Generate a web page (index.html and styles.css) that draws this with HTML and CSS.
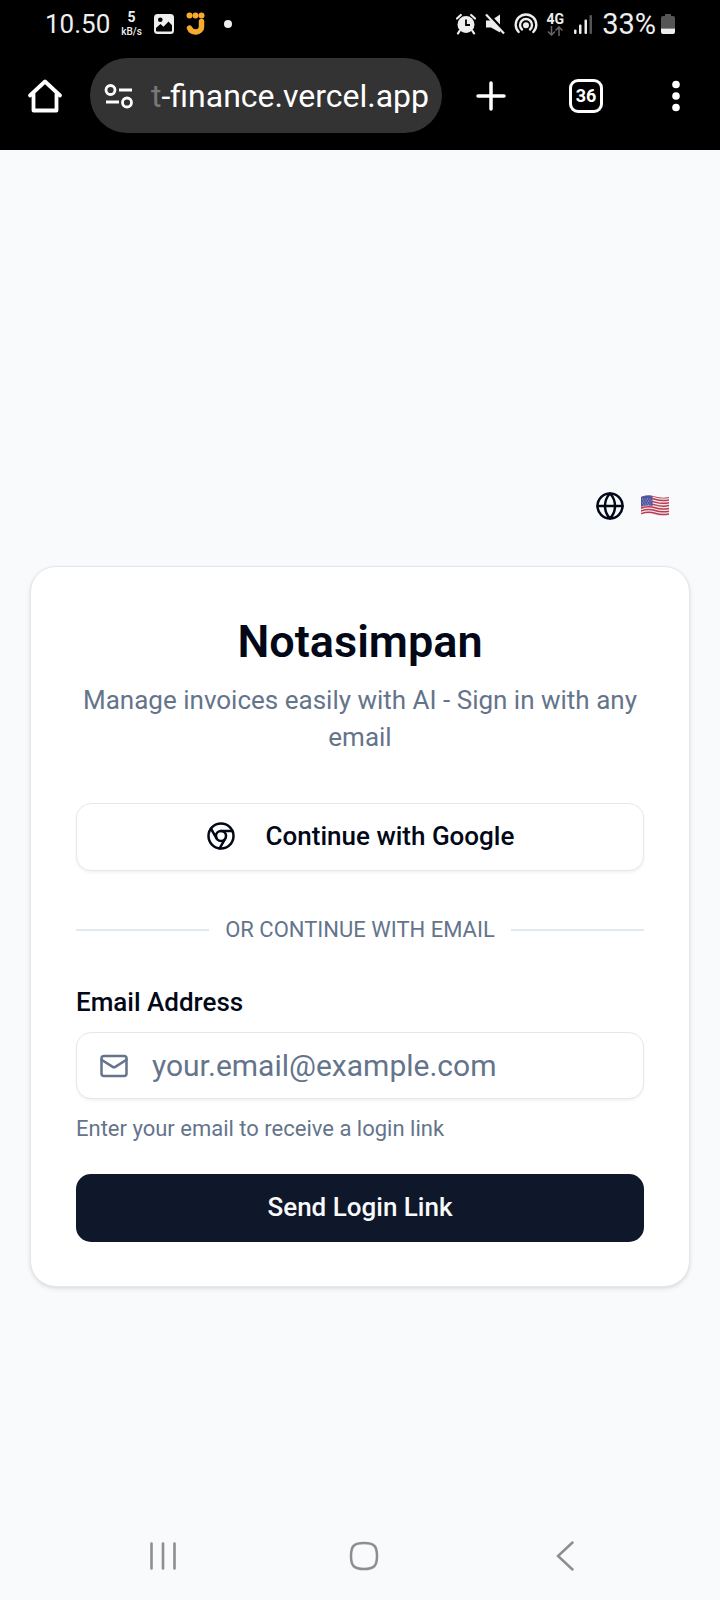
FILE: index.html
```html
<!DOCTYPE html>
<html lang="en">
<head>
<meta charset="utf-8">
<meta name="viewport" content="width=device-width, initial-scale=1">
<title>Notasimpan</title>
<link rel="stylesheet" href="styles.css">
</head>
<body>
<header class="system">
  <div class="status">
    <div class="status-left">
      <span class="clock">10.50</span>
      <span class="speed"><b>5</b><span>kB/s</span></span>
      <svg width="22" height="22" viewBox="0 0 22 22"><rect x="1" y="1" width="20" height="20" rx="3.5" fill="#eee"/><circle cx="7.3" cy="6.7" r="2.3" fill="#000"/><path d="M3 17.5V15l4.5-4 3 2.7L15.500 8.500 19 12.200V17.500a1 1 0 0 1-1 1H4a1 1 0 0 1-1-1z" fill="#000"/></svg>
      <svg width="19" height="24" viewBox="0 0 19 24"><g fill="#f6ab2f"><circle cx="3.500" cy="3.500" r="3"/><circle cx="9.500" cy="3.500" r="3"/><circle cx="15.500" cy="3.500" r="3"/></g><path d="M15.500 9.500v4.500a5.500 5.500 0 0 1-6 6c-3 0-5-1.500-6-4" fill="none" stroke="#f6ab2f" stroke-width="5.500" stroke-linecap="round"/></svg>
      <span class="dot"></span>
    </div>
    <div class="status-right">
      <svg width="20" height="22" viewBox="0 0 20 22"><circle cx="10" cy="11.500" r="8.500" fill="#eee"/><path d="M1 5.500 4.800 2M19 5.500 15.200 2M3.500 18l-1.500 2.300M16.500 18l1.500 2.300" stroke="#eee" stroke-width="2.200" stroke-linecap="round"/><path d="M10 6.500v5.500h4" fill="none" stroke="#000" stroke-width="1.800"/></svg>
      <svg width="20" height="22" viewBox="0 0 20 22"><path d="M1 7.500h5L15 1.500v18L6 14.500H1z" fill="#eee"/><path d="M2.500.5 21 20" stroke="#000" stroke-width="3"/><path d="M1 1.500 19 20.500" stroke="#eee" stroke-width="2.200"/></svg>
      <svg width="24" height="22" viewBox="0 0 24 22" fill="none" stroke="#eee" stroke-width="2.400" stroke-linecap="round"><path d="M4.700 19a10.300 10.300 0 1 1 14.600 0"/><path d="M8 16.500a6 6 0 1 1 8 0"/><circle cx="12" cy="12.200" r="1.800" fill="#eee"/></svg>
      <span class="network"><b>4G</b><svg width="16" height="10" viewBox="0 0 16 10" fill="none" stroke="#666" stroke-width="1.500"><path d="M4.500 0v9M1 5.500 4.500 9 8 5.500M12 10V1M8.500 4.500 12 1l3.500 3.500"/></svg></span>
      <svg width="20" height="22" viewBox="0 0 20 22"><g fill="#eee"><rect x="1" y="16.500" width="2.500" height="4.500" rx="1"/><rect x="6" y="11.500" width="2.500" height="9.500" rx="1"/><rect x="11.500" y="6.500" width="2.500" height="14.500" rx="1"/></g><rect x="16.500" y="2" width="2.500" height="19" rx="1" fill="#555"/></svg>
      <span class="battery">33%</span>
      <svg width="14" height="22" viewBox="0 0 14 22"><path d="M4 1h6v2h2a2 2 0 0 1 2 2v10.500H0V5a2 2 0 0 1 2-2h2z" fill="#555"/><path d="M0 15.500h14V19a2 2 0 0 1-2 2H2a2 2 0 0 1-2-2z" fill="#eee"/></svg>
    </div>
  </div>
  <nav class="browser" aria-label="Browser">
    <button class="tool" aria-label="Home"><svg width="36" height="36" viewBox="0 0 36 36" fill="none" stroke="#fff" stroke-width="3.800" stroke-linecap="round" stroke-linejoin="round"><path d="M3 17.500 18 3.500l15 14"/><path d="M6.500 16v16.500h23V16"/></svg></button>
    <button class="address"><svg width="30" height="26" viewBox="0 0 30 26" fill="none" stroke="#fff" stroke-width="2.800"><circle cx="6.500" cy="7" r="4.500"/><path d="M15 7h13M2 19h13"/><circle cx="23" cy="19.500" r="4.500"/></svg><span class="url"><span class="faded">t</span>-finance.vercel.app</span></button>
    <button class="tool" aria-label="New tab"><svg width="30" height="30" viewBox="0 0 30 30" stroke="#fff" stroke-width="3.500" stroke-linecap="round"><path d="M15 2v26M2 15h26"/></svg></button>
    <button class="tool" aria-label="36 open tabs"><span class="tabs">36</span></button>
    <button class="tool" aria-label="Menu"><svg width="8" height="32" viewBox="0 0 8 32" fill="#fff"><circle cx="4" cy="4.500" r="3.800"/><circle cx="4" cy="16" r="3.800"/><circle cx="4" cy="27.500" r="3.800"/></svg></button>
  </nav>
</header>

<main class="page">
  <button class="language" aria-label="Language: English (US)">
    <svg class="icon" viewBox="0 0 24 24"><circle cx="12" cy="12" r="10"/><path d="M12 2a14.500 14.500 0 0 0 0 20 14.500 14.500 0 0 0 0-20"/><path d="M2 12h20"/></svg>
    <svg width="30" height="22" viewBox="0 0 30 22">
      <defs><clipPath id="wave"><path d="M1 2Q8-.5 15 1.500T29 2V20Q22 22.500 15 20.200T1 19.500z"/></clipPath></defs>
      <g clip-path="url(#wave)">
        <rect width="30" height="22" fill="#f4e9ee"/>
        <g fill="none" stroke="#b93c50" stroke-width="1.500">
          <path d="M0 2.300Q8-.7 15 1.500T30 2M0 5.100Q8 2.100 15 4.300T30 4.800M0 7.900Q8 4.900 15 7.100T30 7.600M0 10.700Q8 7.700 15 9.900T30 10.400M0 13.500Q8 10.500 15 12.700T30 13.200M0 16.300Q8 13.300 15 15.500T30 16M0 19.100Q8 16.100 15 18.300T30 18.800"/>
        </g>
        <path d="M0 0H12.500V11Q7 9.500 0 12z" fill="#5055a0"/>
        <path d="M2 4h10M3 6h10M2 8h10M3 10h8" stroke="#b9bbdc" stroke-width=".8" stroke-dasharray="1 1.500"/>
      </g>
    </svg>
  </button>

  <section class="card">
    <h1 class="title">Notasimpan</h1>
    <p class="subtitle">Manage invoices easily with AI - Sign in with any email</p>
    <button class="button outline">
      <svg class="icon" viewBox="0 0 24 24"><circle cx="12" cy="12" r="10"/><circle cx="12" cy="12" r="4"/><path d="M21.170 8H12M3.950 6.060 8.540 14M10.880 21.940 15.460 14"/></svg>
      Continue with Google
    </button>
    <div class="divider"><span>OR CONTINUE WITH EMAIL</span></div>
    <form class="form">
      <label class="label" for="email">Email Address</label>
      <div class="field">
        <svg class="icon" viewBox="0 0 24 24"><rect x="2" y="4" width="20" height="16" rx="2"/><path d="m22 7-8.970 5.700a1.940 1.940 0 0 1-2.060 0L2 7"/></svg>
        <input class="input" id="email" type="email" placeholder="your.email@example.com" aria-describedby="hint">
      </div>
      <p class="hint" id="hint">Enter your email to receive a login link</p>
      <button class="button primary" type="submit">Send Login Link</button>
    </form>
  </section>
</main>

<nav class="android" aria-label="System">
  <button class="tool" aria-label="Recent apps"><svg width="28" height="30" viewBox="0 0 28 30" stroke="#8c8e90" stroke-width="2.600" stroke-linecap="round"><path d="M2.500 2.500v25M14 2.500v25M25.500 2.500v25"/></svg></button>
  <button class="tool" aria-label="Home"><svg width="30" height="30" viewBox="0 0 30 30" fill="none" stroke="#8c8e90" stroke-width="2.500"><path d="M15 2C25 2 28 5 28 15S25 28 15 28 2 25 2 15 5 2 15 2z"/></svg></button>
  <button class="tool" aria-label="Back"><svg width="18" height="30" viewBox="0 0 18 30" fill="none" stroke="#8c8e90" stroke-width="2.500" stroke-linecap="round"><path d="M16.500 1.500 2 15l14.500 13.500"/></svg></button>
</nav>
</body>
</html>
```
FILE: styles.css
```css
* { box-sizing: border-box; }

body {
  margin: 0;
  min-height: 100vh;
  display: flex;
  flex-direction: column;
  background: #f8fafc;
  color: #020817;
  font-family: Roboto, "Liberation Sans", sans-serif;
}

button {
  border: 0;
  padding: 0;
  background: none;
  color: inherit;
  font: inherit;
}

svg { display: block; flex: none; }

.system { background: #000; color: #fff; padding-bottom: 17px; }

.status {
  display: flex;
  justify-content: space-between;
  height: 58px;
  padding: 0 45px 11px;
  color: #eee;
}

.status-left, .status-right { display: flex; align-items: center; }
.status-left { gap: 11px; }
.status-right { gap: 9px; }

.clock { font-size: 26px; line-height: 32px; }
.battery { margin-right: -4px; font-size: 29px; line-height: 32px; }

.speed, .network {
  display: flex;
  flex-direction: column;
  align-items: center;
  font-size: 10px;
  line-height: 12px;
  font-weight: 500;
}
.speed b { font-size: 14px; line-height: 17px; }
.network b { font-size: 14px; line-height: 14px; }

.dot { width: 8px; height: 8px; margin-left: 8px; border-radius: 50%; background: #eee; }

.browser {
  display: grid;
  grid-template-columns: 90px 1fr 97px 94px 85px;
  padding-right: 2px;
  height: 75px;
}

.tool { display: flex; align-items: center; justify-content: center; }

.address {
  display: flex;
  align-items: center;
  gap: 17px;
  min-width: 0;
  padding: 0 12px 0 14px;
  border-radius: 38px;
  background: #333;
  overflow: hidden;
}

.url { font-size: 32px; line-height: 40px; white-space: nowrap; }
.faded { color: #777; }

.tabs {
  width: 34px;
  height: 34px;
  border: 3px solid #fff;
  border-radius: 9px;
  font-size: 18px;
  line-height: 28px;
  font-weight: 700;
}

.page {
  flex: 1;
  display: flex;
  flex-direction: column;
  gap: 42px;
  padding: 337px 30px 0;
}

.language {
  display: flex;
  align-items: center;
  align-self: flex-end;
  gap: 15px;
  height: 37px;
  padding-right: 20px;
}

.icon {
  width: 30px;
  height: 30px;
  fill: none;
  stroke: currentColor;
  stroke-width: 2;
  stroke-linecap: round;
  stroke-linejoin: round;
}

.card {
  padding: 45px 45px 44px;
  border: 1px solid #e2e8f0;
  border-radius: 26px;
  background: #fff;
  box-shadow: 0 2px 5px rgba(0, 0, 0, .08), 0 1px 3px rgba(0, 0, 0, .06);
}

.title {
  margin: 0 0 10px;
  font-size: 45px;
  line-height: 60px;
  font-weight: 600;
  text-align: center;
}

.subtitle {
  margin: 0 0 47px;
  color: #64748b;
  font-size: 26px;
  line-height: 37px;
  text-align: center;
}

.button {
  display: flex;
  align-items: center;
  justify-content: center;
  gap: 30px;
  width: 100%;
  height: 68px;
  padding-bottom: 3px;
  border-radius: 15px;
  font-size: 26px;
  line-height: 36px;
  font-weight: 500;
}

.outline, .field {
  border: 1px solid #e2e8f0;
  background: #fff;
  box-shadow: 0 2px 3px rgba(0, 0, 0, .05);
}

.primary { background: #0f172a; color: #f8fafc; }

.divider {
  display: flex;
  align-items: center;
  gap: 16px;
  margin: 44px 0;
  color: #64748b;
  font-size: 22px;
  line-height: 30px;
}
.divider::before, .divider::after { content: ""; flex: 1; height: 2px; background: #e2e8f0; }

.form { margin: 0; }

.label {
  display: block;
  margin-bottom: 17px;
  font-size: 26px;
  line-height: 26px;
  font-weight: 500;
}

.field {
  display: flex;
  align-items: center;
  gap: 23px;
  height: 67px;
  padding: 0 22px;
  border-radius: 15px;
  color: #64748b;
}

.input {
  flex: 1;
  min-width: 0;
  padding: 0;
  border: 0;
  outline: 0;
  background: none;
  color: #020817;
  font: 30px/44px Roboto, "Liberation Sans", sans-serif;
}
.input::placeholder { color: #64748b; opacity: 1; }

.hint {
  margin: 15px 0 30px;
  color: #64748b;
  font-size: 22px;
  line-height: 30px;
}

.android {
  display: grid;
  grid-template-columns: repeat(3, 1fr);
  height: 89px;
  padding: 0 54px 0 62px;
}
```
